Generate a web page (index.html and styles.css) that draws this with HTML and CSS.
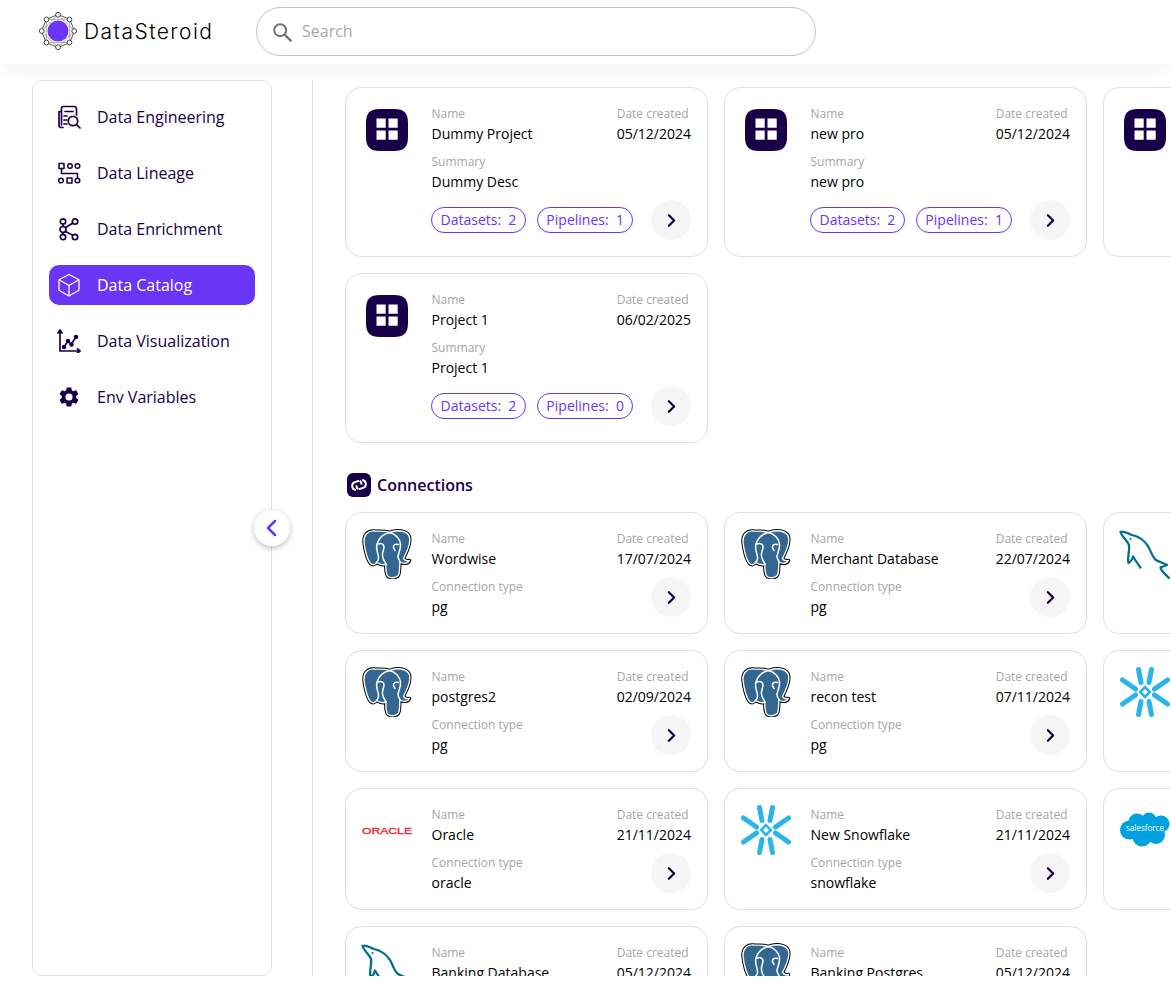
FILE: index.html
```html
<!DOCTYPE html>
<html lang="en">
<head>
<meta charset="utf-8">
<title>DataSteroid</title>
<link rel="stylesheet" href="styles.css">
</head>
<body>
<svg class="defs" aria-hidden="true">
  <symbol id="pg" viewBox="0 0 50 50">
    <path d="M13 2C6 1 1.500 6 2 13C2.600 21 5.500 31 8.500 34.500C10.500 36.500 13 36 14.500 33.500C17 35 21 36.500 24 35C23.500 39 24 43 25 46C26.500 49.500 34 50 36.500 46C38 43.500 37.500 37 38 33C41 35 46 35 47.500 31.500C45 32 42.500 31 41.500 29.500C45 23 49 14 47.500 8C45.500 1 34 .5 27.500 3.500C23 1.500 18 2.500 13 2Z" fill="#000" stroke="#000" stroke-width="3.400" stroke-linejoin="round"/>
    <path d="M13 2C6 1 1.500 6 2 13C2.600 21 5.500 31 8.500 34.500C10.500 36.500 13 36 14.500 33.500C17 35 21 36.500 24 35C23.500 39 24 43 25 46C26.500 49.500 34 50 36.500 46C38 43.500 37.500 37 38 33C41 35 46 35 47.500 31.500C45 32 42.500 31 41.500 29.500C45 23 49 14 47.500 8C45.500 1 34 .5 27.500 3.500C23 1.500 18 2.500 13 2Z" fill="#336791" stroke="#fff" stroke-width="1.400" stroke-linejoin="round"/>
    <path d="M27.500 3.500C21 5 16.500 10 15 15c-1.500 5 1 9 1.500 13 .3 2-1 4.500-2 5.500M16 15c3-1.500 6 0 6 3 0 3-2 5-1.500 9 .3 3 1.500 5 3.500 8M27.500 3.500C34 5 38 10 38.500 15c.5 5-2 9-2.500 12-.3 2.500 1.500 4 2 6M36.500 15.500c-3-1-5.500.5-5 3 .3 1.500 1 1.500 1.500 3" fill="none" stroke="#fff" stroke-width="1.500" stroke-linecap="round"/>
  </symbol>
  <symbol id="mysql" viewBox="0 0 50 50" overflow="visible">
    <path d="M.5 3C4 1 8 5 12 6c7 1.500 12 5 16 11 3 5 4 11 8 14 3 2 8 3 11 5l-6.500 2.500c0 3 5 7 8.500 10.500M.5 3c1.500 5 6.500 8 8.500 13 1 6-2 12-.5 18 2-1 3.500-3 4.500-6.500 2 3.500 5 7.500 7.500 11" fill="none" stroke="#00708f" stroke-width="2.300" stroke-linejoin="round" stroke-linecap="round"/>
    <circle cx="10.500" cy="10" r="1" fill="#00708f"/>
  </symbol>
  <symbol id="snow" viewBox="-25 -25 50 50">
    <path d="M-6.500-22.500-4-9.500M6.500-22.500 4-9.500M-6.500 22.500-4 9.500M6.500 22.500 4 9.500M-22.500-12-9.500-3M-22.500 12-9.500 3M22.500-12 9.500-3M22.500 12 9.500 3" fill="none" stroke="#29b5e8" stroke-width="5" stroke-linecap="round"/>
    <path d="M0-4.800 4.800 0 0 4.800-4.800 0Z" fill="none" stroke="#29b5e8" stroke-width="2.600"/>
  </symbol>
  <symbol id="grid4" viewBox="0 0 42 42">
    <path d="M14 0h14C38 0 42 4 42 14v14c0 10-4 14-14 14H14C4 42 0 38 0 28V14C0 4 4 0 14 0Z" fill="#170048"/>
    <path d="M10.500 9.500h9.200v9.200h-9.200zM22.500 9.500h9.200v9.200h-9.200zM10.500 21.500h9.200v9.200h-9.200zM22.500 21.500h9.200v9.200h-9.200z" fill="#fff"/>
  </symbol>
  <symbol id="chev" viewBox="0 0 24 24">
    <path d="M9 6l6 6-6 6" fill="none" stroke="#170048" stroke-width="2.600" stroke-linecap="round" stroke-linejoin="round"/>
  </symbol>
</svg>

<header class="topbar">
  <div class="brand">
    <svg class="brand-mark" viewBox="0 0 38 38">
      <g fill="none" stroke="#555" stroke-width="1">
        <path d="M19 2.500 30.700 7.300 35.500 19 30.700 30.700 19 35.500 7.300 30.700 2.500 19 7.300 7.300Z"/>
        <path d="M19 2.500 35.500 19 19 35.500 2.500 19ZM7.300 7.300 30.700 7.300 30.700 30.700 7.300 30.700Z" stroke-width=".5"/>
      </g>
      <circle cx="19" cy="19" r="11" fill="#fff"/>
      <circle cx="19" cy="19" r="10.500" fill="#6a35f4"/>
      <g fill="#fff" stroke="#444" stroke-width="1">
        <circle cx="19" cy="2.800" r="2.400"/><circle cx="30.500" cy="7.500" r="2.400"/>
        <circle cx="35.200" cy="19" r="2.400"/><circle cx="30.500" cy="30.500" r="2.400"/>
        <circle cx="19" cy="35.200" r="2.400"/><circle cx="7.500" cy="30.500" r="2.400"/>
        <circle cx="2.800" cy="19" r="2.400"/><circle cx="7.500" cy="7.500" r="2.400"/>
      </g>
    </svg>
    <span class="brand-name">DataSteroid</span>
  </div>
  <div class="search">
    <svg class="search-icon" viewBox="0 0 24 24"><circle cx="10" cy="10" r="6.500" fill="none" stroke="#757575" stroke-width="2.200"/><path d="M15 15l6.500 6.500" stroke="#757575" stroke-width="2.600" stroke-linecap="round"/></svg>
    <span class="search-text">Search</span>
  </div>
</header>

<div class="shell">
  <aside class="sidebar">
    <a class="nav-item">
      <svg class="nav-icon" viewBox="0 0 24 24" fill="none" stroke="currentColor" stroke-width="1.700" stroke-linecap="round" stroke-linejoin="round"><path d="M6 22.500H4.500A2.500 2.500 0 0 1 2 20V6.500h2.500M4.500 20V3.500A2 2 0 0 1 6.500 1.500H17A2.500 2.500 0 0 1 19.500 4v6"/><path d="M8 6.500h8M7 11h3M7 15h3M7 19h3"/><circle cx="16" cy="16" r="4.700"/><path d="M19.500 19.500l3.500 3.500"/></svg>
      <span>Data Engineering</span>
    </a>
    <a class="nav-item">
      <svg class="nav-icon" viewBox="0 0 24 24" fill="none" stroke="currentColor" stroke-width="1.500" stroke-linecap="round" stroke-linejoin="round"><rect x="2" y="2.500" width="5" height="5"/><circle cx="13" cy="5" r="2.300"/><circle cx="20.500" cy="5" r="2.300"/><path d="M4.500 7.500v5h16V17"/><circle cx="4" cy="19.500" r="2.300"/><rect x="10" y="17" width="5" height="5"/><circle cx="20.500" cy="19.500" r="2.300"/></svg>
      <span>Data Lineage</span>
    </a>
    <a class="nav-item">
      <svg class="nav-icon" viewBox="0 0 24 24" fill="none" stroke="currentColor" stroke-width="1.700" stroke-linecap="round"><circle cx="6" cy="4.500" r="2.700"/><circle cx="18" cy="4.500" r="2.700"/><circle cx="6" cy="12.500" r="3"/><circle cx="6" cy="20" r="2.700"/><circle cx="18" cy="20" r="2.700"/><path d="M6 7.200v2.300M6 15.500v1.800M8.500 10.500l7.500-4.500M8.500 14.500l7.300 3.700"/></svg>
      <span>Data Enrichment</span>
    </a>
    <a class="nav-item nav-item-active">
      <svg class="nav-icon" viewBox="0 0 24 24" fill="none" stroke="currentColor" stroke-width="1.300" stroke-linejoin="round"><path d="M12 1.500 22 6.800v10.400L12 23 2 17.200V6.800Z"/><path d="M2 6.800 12 12.500 22 6.800M12 12.500V23"/></svg>
      <span>Data Catalog</span>
    </a>
    <a class="nav-item">
      <svg class="nav-icon" viewBox="0 0 24 24" fill="none" stroke="currentColor" stroke-width="1.700" stroke-linecap="round" stroke-linejoin="round"><path d="M1 4 3 1l2 3M3 1v21h20M20.500 20l2.500 2-2.500 2"/><path d="M7 18l4-6 3 3.500L19 8"/><circle cx="7" cy="18" r="1.400" fill="currentColor"/><circle cx="11" cy="12" r="1.400" fill="currentColor"/><circle cx="14.500" cy="15.500" r="1.400" fill="currentColor"/><circle cx="19" cy="8" r="1.400" fill="currentColor"/></svg>
      <span>Data Visualization</span>
    </a>
    <a class="nav-item">
      <svg class="nav-icon" viewBox="0 0 24 24"><path fill="currentColor" d="M19.140 12.940c.04-.3.060-.61.060-.94 0-.32-.020-.64-.070-.94l2.030-1.580a.49.49 0 0 0 .12-.61l-1.920-3.320a.49.49 0 0 0-.59-.22l-2.390.96c-.5-.38-1.030-.7-1.620-.94l-.36-2.540a.484.484 0 0 0-.48-.41h-3.840c-.24 0-.43.170-.47.410l-.36 2.540c-.59.240-1.130.57-1.620.94l-2.390-.96a.49.49 0 0 0-.59.220L2.740 8.870c-.12.210-.08.470.12.610l2.030 1.580c-.05.300-.09.630-.09.940s.02.640.07.940l-2.030 1.580a.49.49 0 0 0-.12.610l1.920 3.320c.12.220.37.290.59.220l2.390-.96c.5.380 1.030.7 1.620.94l.36 2.540c.05.240.24.410.48.410h3.840c.24 0 .44-.17.470-.41l.36-2.540c.59-.24 1.130-.56 1.620-.94l2.390.96c.22.080.47 0 .59-.22l1.920-3.320a.49.49 0 0 0-.12-.61l-2.010-1.580ZM12 15.600A3.600 3.600 0 1 1 12 8.400a3.600 3.600 0 0 1 0 7.200Z"/></svg>
      <span>Env Variables</span>
    </a>
    <button class="collapse" type="button" aria-label="Collapse sidebar">
      <svg viewBox="0 0 24 24"><path d="M15 5l-7 7 7 7" fill="none" stroke="#6a35f4" stroke-width="2.500" stroke-linecap="round" stroke-linejoin="round"/></svg>
    </button>
  </aside>

  <main class="main">
    <section class="cards">
      <article class="card">
        <div class="logo"><svg class="logo-project"><use href="#grid4"/></svg></div>
        <div class="body">
          <div class="row">
            <div class="field"><div class="label">Name</div><div class="value">Dummy Project</div></div>
            <div class="field"><div class="label">Date created</div><div class="value">05/12/2024</div></div>
          </div>
          <div class="field"><div class="label">Summary</div><div class="value">Dummy Desc</div></div>
          <div class="row">
            <div class="pills"><span class="pill">Datasets:&nbsp; 2</span><span class="pill">Pipelines:&nbsp; 1</span></div>
            <span class="go"><svg class="go-icon"><use href="#chev"/></svg></span>
          </div>
        </div>
      </article>
      <article class="card">
        <div class="logo"><svg class="logo-project"><use href="#grid4"/></svg></div>
        <div class="body">
          <div class="row">
            <div class="field"><div class="label">Name</div><div class="value">new pro</div></div>
            <div class="field"><div class="label">Date created</div><div class="value">05/12/2024</div></div>
          </div>
          <div class="field"><div class="label">Summary</div><div class="value">new pro</div></div>
          <div class="row">
            <div class="pills"><span class="pill">Datasets:&nbsp; 2</span><span class="pill">Pipelines:&nbsp; 1</span></div>
            <span class="go"><svg class="go-icon"><use href="#chev"/></svg></span>
          </div>
        </div>
      </article>
      <article class="card card-project-stub">
        <div class="logo"><svg class="logo-project"><use href="#grid4"/></svg></div>
      </article>
      <article class="card">
        <div class="logo"><svg class="logo-project"><use href="#grid4"/></svg></div>
        <div class="body">
          <div class="row">
            <div class="field"><div class="label">Name</div><div class="value">Project 1</div></div>
            <div class="field"><div class="label">Date created</div><div class="value">06/02/2025</div></div>
          </div>
          <div class="field"><div class="label">Summary</div><div class="value">Project 1</div></div>
          <div class="row">
            <div class="pills"><span class="pill">Datasets:&nbsp; 2</span><span class="pill">Pipelines:&nbsp; 0</span></div>
            <span class="go"><svg class="go-icon"><use href="#chev"/></svg></span>
          </div>
        </div>
      </article>
    </section>

    <h2 class="section-title">
      <svg class="section-icon" viewBox="0 0 24 24"><rect width="24" height="24" rx="6" fill="#170048"/><g fill="none" stroke="#fff" stroke-width="2" transform="rotate(-18 12 12)"><path d="M13.500 8H9a4 4 0 0 0-1.500 7.700"/><path d="M10.500 16H15a4 4 0 0 0 1.500-7.700"/><path d="M14 8.300a4 4 0 0 1 .5 4.200M10 15.700a4 4 0 0 1-.5-4.200"/></g></svg>
      <span>Connections</span>
    </h2>

    <section class="cards">
      <article class="card">
        <div class="logo"><svg class="logo-db"><use href="#pg"/></svg></div>
        <div class="body conn-body">
          <div class="col"><div class="field"><div class="label">Name</div><div class="value">Wordwise</div></div><div class="field"><div class="label">Connection type</div><div class="value">pg</div></div></div>
          <div class="col"><div class="field"><div class="label">Date created</div><div class="value">17/07/2024</div></div><span class="go go-end"><svg class="go-icon"><use href="#chev"/></svg></span></div>
        </div>
      </article>
      <article class="card">
        <div class="logo"><svg class="logo-db"><use href="#pg"/></svg></div>
        <div class="body conn-body">
          <div class="col"><div class="field"><div class="label">Name</div><div class="value">Merchant Database</div></div><div class="field"><div class="label">Connection type</div><div class="value">pg</div></div></div>
          <div class="col"><div class="field"><div class="label">Date created</div><div class="value">22/07/2024</div></div><span class="go go-end"><svg class="go-icon"><use href="#chev"/></svg></span></div>
        </div>
      </article>
      <article class="card card-conn-stub">
        <div class="logo"><svg class="logo-db"><use href="#mysql"/></svg></div>
      </article>

      <article class="card">
        <div class="logo"><svg class="logo-db"><use href="#pg"/></svg></div>
        <div class="body conn-body">
          <div class="col"><div class="field"><div class="label">Name</div><div class="value">postgres2</div></div><div class="field"><div class="label">Connection type</div><div class="value">pg</div></div></div>
          <div class="col"><div class="field"><div class="label">Date created</div><div class="value">02/09/2024</div></div><span class="go go-end"><svg class="go-icon"><use href="#chev"/></svg></span></div>
        </div>
      </article>
      <article class="card">
        <div class="logo"><svg class="logo-db"><use href="#pg"/></svg></div>
        <div class="body conn-body">
          <div class="col"><div class="field"><div class="label">Name</div><div class="value">recon test</div></div><div class="field"><div class="label">Connection type</div><div class="value">pg</div></div></div>
          <div class="col"><div class="field"><div class="label">Date created</div><div class="value">07/11/2024</div></div><span class="go go-end"><svg class="go-icon"><use href="#chev"/></svg></span></div>
        </div>
      </article>
      <article class="card card-conn-stub">
        <div class="logo"><svg class="logo-db"><use href="#snow"/></svg></div>
      </article>

      <article class="card">
        <div class="logo logo-mid">
          <svg class="logo-oracle" viewBox="0 0 50 10"><text class="oracle-text" x="0" y="8.500" textLength="50" lengthAdjust="spacingAndGlyphs">ORACLE</text></svg>
        </div>
        <div class="body conn-body">
          <div class="col"><div class="field"><div class="label">Name</div><div class="value">Oracle</div></div><div class="field"><div class="label">Connection type</div><div class="value">oracle</div></div></div>
          <div class="col"><div class="field"><div class="label">Date created</div><div class="value">21/11/2024</div></div><span class="go go-end"><svg class="go-icon"><use href="#chev"/></svg></span></div>
        </div>
      </article>
      <article class="card">
        <div class="logo"><svg class="logo-db"><use href="#snow"/></svg></div>
        <div class="body conn-body">
          <div class="col"><div class="field"><div class="label">Name</div><div class="value">New Snowflake</div></div><div class="field"><div class="label">Connection type</div><div class="value">snowflake</div></div></div>
          <div class="col"><div class="field"><div class="label">Date created</div><div class="value">21/11/2024</div></div><span class="go go-end"><svg class="go-icon"><use href="#chev"/></svg></span></div>
        </div>
      </article>
      <article class="card card-conn-stub">
        <div class="logo logo-mid">
          <svg class="logo-sf" viewBox="0 0 50 35">
            <g fill="#00a1e0"><circle cx="17" cy="10" r="8.500"/><circle cx="29" cy="8" r="7.500"/><circle cx="41" cy="12" r="8.500"/><circle cx="9.500" cy="18" r="9.500"/><circle cx="22" cy="25" r="9.500"/><circle cx="36" cy="23" r="9"/><rect x="10" y="8" width="32" height="18"/></g>
            <text class="sf-text" x="25" y="18.500" text-anchor="middle" textLength="38" lengthAdjust="spacingAndGlyphs">salesforce</text>
          </svg>
        </div>
      </article>

      <article class="card">
        <div class="logo"><svg class="logo-db"><use href="#mysql"/></svg></div>
        <div class="body conn-body">
          <div class="col"><div class="field"><div class="label">Name</div><div class="value">Banking Database</div></div></div>
          <div class="col"><div class="field"><div class="label">Date created</div><div class="value">05/12/2024</div></div></div>
        </div>
      </article>
      <article class="card">
        <div class="logo"><svg class="logo-db"><use href="#pg"/></svg></div>
        <div class="body conn-body">
          <div class="col"><div class="field"><div class="label">Name</div><div class="value">Banking Postgres</div></div></div>
          <div class="col"><div class="field"><div class="label">Date created</div><div class="value">05/12/2024</div></div></div>
        </div>
      </article>
    </section>
  </main>
</div>
</body>
</html>
```

FILE: styles.css
```css
* { box-sizing: border-box; }

html, body {
  margin: 0;
  height: 992px;
  overflow: hidden;
  background: #fff;
}

body {
  font-family: "Open Sans", "Liberation Sans", sans-serif;
  color: #000;
  display: flex;
  flex-direction: column;
}

.defs { width: 0; height: 0; position: absolute; }

/* Top bar */
.topbar {
  height: 64px;
  flex: none;
  display: flex;
  align-items: center;
  padding: 0 0 1px 39px;
  background: #fff;
  box-shadow: 0 4px 20px rgba(0, 0, 0, 0.05);
  position: relative;
  z-index: 2;
}

.brand {
  display: flex;
  align-items: center;
  gap: 7px;
  width: 217px;
}

.brand-mark { width: 38px; height: 38px; flex: none; margin-top: -1px; }

.brand-name {
  font-family: "Inter", sans-serif;
  font-size: 21px;
  font-weight: 300;
  letter-spacing: 1.460px;
  color: #000;
}

.search {
  width: 560px;
  height: 49px;
  border: 1px solid #c4c4c4;
  border-radius: 25px;
  display: flex;
  align-items: center;
  gap: 9px;
  padding-left: 14px;
}

.search-icon { width: 22px; height: 22px; }
.search-text { font-size: 16px; color: #a8a8a8; padding-bottom: 2px; }

/* Shell */
.shell {
  flex: none;
  height: 912px;
  padding: 16px 0 0 32px;
  display: flex;
}

/* Sidebar */
.sidebar {
  width: 240px;
  height: 896px;
  flex: none;
  border: 1px solid #e0e0e0;
  border-radius: 10px;
  padding: 16px;
  display: flex;
  flex-direction: column;
  gap: 16px;
  position: relative;
  background: #fff;
}

.nav-item {
  height: 40px;
  display: flex;
  align-items: center;
  gap: 16px;
  padding: 0 8px;
  border-radius: 10px;
  font-size: 16px;
  color: #170048;
}

.nav-item-active { background: #6a35f4; color: #fff; }
.nav-icon { width: 24px; height: 24px; flex: none; }

.collapse {
  position: absolute;
  right: -19px;
  top: 429px;
  width: 36px;
  height: 36px;
  border: 0;
  padding: 6px;
  border-radius: 50%;
  background: #fff;
  box-shadow: 0 2px 6px rgba(0, 0, 0, 0.25);
  z-index: 3;
}

.collapse svg { width: 24px; height: 24px; display: block; }

/* Main */
.main {
  flex: 1;
  min-width: 0;
  height: 896px;
  margin-left: 40px;
  border-left: 1px solid #e0e0e0;
  padding: 7px 0 0 32px;
  overflow: hidden;
}

.cards {
  display: grid;
  grid-template-columns: repeat(3, 363px);
  gap: 16px;
}

.card {
  border: 1px solid #e0e0e0;
  border-radius: 16px;
  padding: 16px;
  display: flex;
  gap: 19.500px;
  background: #fff;
}

.logo {
  width: 50px;
  flex: none;
  display: flex;
  justify-content: center;
  align-items: flex-start;
}

.logo-mid { padding-top: 8px; }
.logo-project { width: 42px; height: 42px; margin-top: 5px; }
.logo-db { width: 50px; height: 50px; overflow: visible; }
.logo-oracle { width: 50px; height: 10px; margin-top: 12px; }
.logo-sf { width: 50px; height: 35px; margin-top: -1px; }

.oracle-text {
  font-family: "Liberation Sans", sans-serif;
  font-size: 9.500px;
  font-weight: 400;
  fill: #e8202a;
  stroke: #e8202a;
  stroke-width: 0.300px;
}

.sf-text {
  font-family: "Open Sans", sans-serif;
  font-size: 8.500px;
  fill: #fff;
}

.body {
  flex: 1;
  min-width: 0;
  display: flex;
  flex-direction: column;
  gap: 8px;
}

.conn-body {
  flex-direction: row;
  justify-content: space-between;
}

.col {
  display: flex;
  flex-direction: column;
  gap: 8px;
}

.row {
  display: flex;
  justify-content: space-between;
  align-items: center;
}

.label {
  font-size: 12px;
  line-height: 20px;
  color: #a9a5a5;
}

.value {
  font-size: 14px;
  line-height: 20px;
  color: #000;
  white-space: nowrap;
}

.pills { display: flex; gap: 11px; margin-left: -0.500px; }

.pill {
  height: 26px;
  border: 1px solid #6a35f4;
  border-radius: 13px;
  padding: 0 8.500px;
  font-size: 14px;
  line-height: 24px;
  color: #6a35f4;
  white-space: nowrap;
}

.go {
  width: 40px;
  height: 40px;
  border-radius: 50%;
  background: #f6f6f7;
  display: flex;
  align-items: center;
  justify-content: center;
  flex: none;
}

.go-end { align-self: flex-end; }
.go-icon { width: 21px; height: 21px; }

/* Section title */
.section-title {
  margin: 30px 0 15px 2px;
  display: flex;
  align-items: center;
  gap: 6px;
  height: 24px;
  font-size: 16px;
  font-weight: 600;
  color: #170048;
}

.section-icon { width: 24px; height: 24px; flex: none; }
```
